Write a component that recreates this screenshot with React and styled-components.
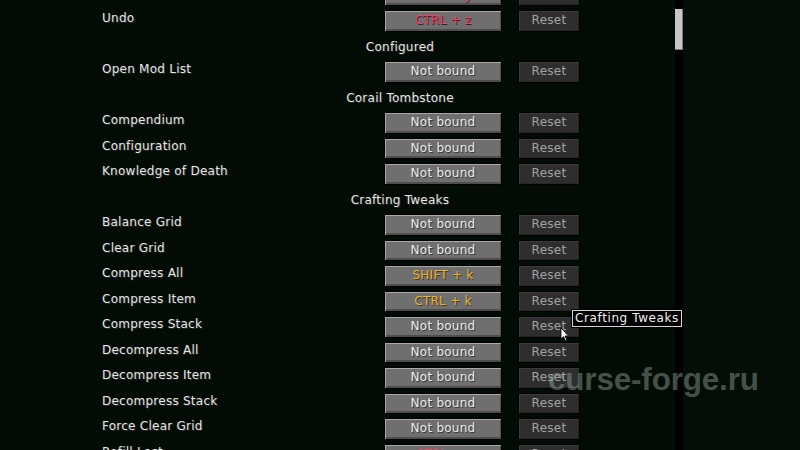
import React from "react";
import styled, { createGlobalStyle } from "styled-components";

const Global = createGlobalStyle`
  html, body { margin: 0; padding: 0; background: #030b05; overflow: hidden; }
  * { box-sizing: border-box; }
`;

const Screen = styled.div`
  position: relative;
  width: 800px;
  height: 450px;
  overflow: hidden;
  background: #030b05;
  display: flex;
  font-family: "DejaVu Sans", "Liberation Sans", sans-serif;
  letter-spacing: 0.25px;
`;

const Main = styled.div`
  width: 675px;
  flex: none;
  display: flex;
  flex-direction: column;
  margin-top: -15.5px;
`;

const Track = styled.div`
  width: 8px;
  flex: none;
  background: #000;
  padding-top: 9px;
`;

const Thumb = styled.div`
  height: 41px;
  background: #c6c6c6;
  box-shadow: inset -1px -1px 0 #7e7e7e;
`;

const Rest = styled.div`
  flex: 1;
  background: #040d06;
`;

const Row = styled.div`
  height: 25.5px;
  flex: none;
  display: grid;
  grid-template-columns: 266px 118px 62px;
  column-gap: 16px;
  padding-left: 102px;
  align-items: start;
`;

const Label = styled.div`
  color: #e6e6e6;
  font-size: 12px;
  line-height: 14px;
  padding-top: 1px;
  text-shadow: 1px 1px 0 #2a2a2a;
  white-space: nowrap;
`;

const Header = styled.div`
  height: 25.5px;
  flex: none;
  display: flex;
  justify-content: center;
  padding-left: 125px;
  padding-top: 4px;
  color: #e6e6e6;
  font-size: 12px;
  line-height: 14px;
  text-shadow: 1px 1px 0 #2a2a2a;
`;

const KeyButton = styled.div`
  height: 21.5px;
  background: #6f6f6f;
  border: 1px solid #000;
  box-shadow: inset 1px 1px 0 #a9a9a9, inset -1px -2px 0 #4e4e4e;
  display: flex;
  align-items: center;
  justify-content: center;
  font-size: 12px;
  padding-bottom: 1px;
  color: ${(p) => (p.$tone === "red" ? "#ee4466" : p.$tone === "gold" ? "#e8b23a" : "#ececec")};
  text-shadow: 1px 1px 0 ${(p) => (p.$tone === "red" ? "#4a1420" : p.$tone === "gold" ? "#4a3810" : "#383838")};
  white-space: nowrap;
`;

const ResetButton = styled.div`
  height: 21.5px;
  background: #2e2e2e;
  border: 1px solid #000;
  box-shadow: inset 1px 1px 0 #3c3c3c, inset -1px -1px 0 #262626;
  display: flex;
  align-items: center;
  justify-content: center;
  font-size: 12px;
  padding-bottom: 1px;
  color: #a2a2a2;
`;

const Tooltip = styled.div`
  position: absolute;
  left: 572px;
  top: 310px;
  width: 110px;
  height: 17px;
  background: #000;
  border: 1px solid #d6d6d6;
  outline: 1px solid #000;
  color: #f0f0f0;
  font-size: 12px;
  line-height: 15px;
  letter-spacing: 0.6px;
  text-align: center;
  white-space: nowrap;
`;

const Cursor = styled.svg`
  position: absolute;
  left: 560px;
  top: 327px;
`;

const Watermark = styled.div`
  position: absolute;
  left: 548px;
  top: 361px;
  font-family: "Liberation Sans", Arial, sans-serif;
  font-weight: 700;
  font-size: 31.5px;
  letter-spacing: -0.2px;
  color: rgba(150, 172, 158, 0.45);
  white-space: nowrap;
`;

const items = [
  { label: "Redo", key: "CTRL + y", tone: "red" },
  { label: "Undo", key: "CTRL + z", tone: "red" },
  { header: "Configured" },
  { label: "Open Mod List" },
  { header: "Corail Tombstone" },
  { label: "Compendium" },
  { label: "Configuration" },
  { label: "Knowledge of Death" },
  { header: "Crafting Tweaks" },
  { label: "Balance Grid" },
  { label: "Clear Grid" },
  { label: "Compress All", key: "SHIFT + k", tone: "gold" },
  { label: "Compress Item", key: "CTRL + k", tone: "gold" },
  { label: "Compress Stack" },
  { label: "Decompress All" },
  { label: "Decompress Item" },
  { label: "Decompress Stack" },
  { label: "Force Clear Grid" },
  { label: "Refill Last", key: "CTRL + r", tone: "red" },
];

export default function App() {
  return (
    <>
      <Global />
      <Screen>
        <Main>
          {items.map((it, i) =>
            it.header ? (
              <Header key={i}>{it.header}</Header>
            ) : (
              <Row key={i}>
                <Label>{it.label}</Label>
                <KeyButton $tone={it.tone}>{it.key || "Not bound"}</KeyButton>
                <ResetButton>Reset</ResetButton>
              </Row>
            )
          )}
        </Main>
        <Track>
          <Thumb />
        </Track>
        <Rest />
        <Tooltip>Crafting Tweaks</Tooltip>
        <Cursor width="10" height="15" viewBox="0 0 10 15">
          <path d="M1 1 L1 12 L3.5 9.5 L5.5 14 L7 13.3 L5 9 L8.5 9 Z" fill="#fff" stroke="#000" strokeWidth="0.8" />
        </Cursor>
        <Watermark>curse-forge.ru</Watermark>
      </Screen>
    </>
  );
}
